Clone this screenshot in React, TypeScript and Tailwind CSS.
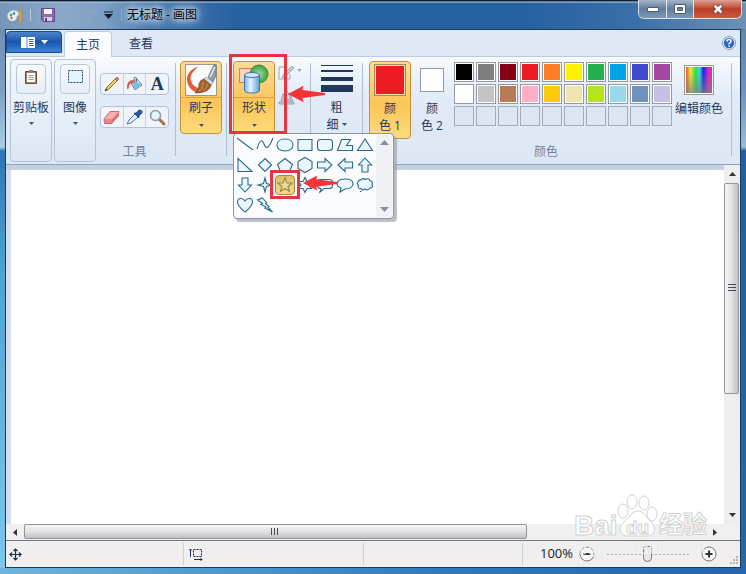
import React from "react";

const ROW_ONE = [
  ["Black", "bg-[#000000]"],
  ["Gray", "bg-[#7f7f7f]"],
  ["Dark red", "bg-[#880015]"],
  ["Red", "bg-[#ed1c24]"],
  ["Orange", "bg-[#ff7f27]"],
  ["Yellow", "bg-[#fff200]"],
  ["Green", "bg-[#22b14c]"],
  ["Turquoise", "bg-[#00a2e8]"],
  ["Indigo", "bg-[#3f48cc]"],
  ["Purple", "bg-[#a349a4]"],
];

const ROW_TWO = [
  ["White", "bg-[#ffffff]"],
  ["Light gray", "bg-[#c3c3c3]"],
  ["Brown", "bg-[#b97a57]"],
  ["Rose", "bg-[#ffaec9]"],
  ["Gold", "bg-[#ffc90e]"],
  ["Light yellow", "bg-[#efe4b0]"],
  ["Lime", "bg-[#b5e61d]"],
  ["Light turquoise", "bg-[#99d9ea]"],
  ["Blue gray", "bg-[#7092be]"],
  ["Lavender", "bg-[#c8bfe7]"],
];

const EMPTY_SLOTS = [1, 2, 3, 4, 5, 6, 7, 8, 9, 10];

const SHAPES = [
  ["Line", "M1 2 L17 14"],
  ["Curve", "M1 13 C4 3 6 3 8 8 C10 14 13 12 17 2"],
  ["Oval", "M9 3 C14 3 17 5.500 17 9 C17 12.500 14 15 9 15 C4 15 1 12.500 1 9 C1 5.500 4 3 9 3Z"],
  ["Rectangle", "M2 3.500H16V14.500H2Z"],
  ["Rounded rectangle", "M4.500 3.500H13.500Q16.500 3.500 16.500 6.500V11.500Q16.500 14.500 13.500 14.500H4.500Q1.500 14.500 1.500 11.500V6.500Q1.500 3.500 4.500 3.500Z"],
  ["Polygon", "M5.500 3.500H14.500L10.500 9.500H16.500V14.500H1.500Z"],
  ["Triangle", "M9 3L16.500 14.500H1.500Z"],
  ["Right triangle", "M2 2.500V15.500H16Z"],
  ["Diamond", "M9 2.500L15.500 9L9 15.500L2.500 9Z"],
  ["Pentagon", "M9 2.500L16.500 8.500L13.500 15.500H4.500L1.500 8.500Z"],
  ["Hexagon", "M9 1.500L16 5.500V12.500L9 16.500L2 12.500V5.500Z"],
  ["Right arrow", "M1.500 6H9V2.500L16 9L9 15.500V12H1.500Z"],
  ["Left arrow", "M16.500 6H9V2.500L2 9L9 15.500V12H16.500Z"],
  ["Up arrow", "M6 16V9H2.500L9 2L15.500 9H12V16Z"],
  ["Down arrow", "M6 2V9H2.500L9 16L15.500 9H12V2Z"],
  ["Four-point star", "M9 2L10.500 7.500L16 9L10.500 10.500L9 16L7.500 10.500L2 9L7.500 7.500Z"],
  ["Five-point star", "M9 2L11 7H16L12 10.500L13.500 15.500L9 12.500L4.500 15.500L6 10.500L2 7H7Z"],
  ["Six-point star", "M9 1.500L11 5.500H15.500L13 9L15.500 12.500H11L9 16.500L7 12.500H2.500L5 9L2.500 5.500H7Z"],
  ["Rounded callout", "M4.500 3.500H13.500Q16.500 3.500 16.500 6.500V9.500Q16.500 12.500 13.500 12.500H8L4 16L5 12.500Q1.500 12.500 1.500 9.500V6.500Q1.500 3.500 4.500 3.500Z"],
  ["Oval callout", "M9 3C14 3 17 5 17 8C17 11 13.500 13 9 13L4 16L5 12C2.500 11 1 10 1 8C1 5 4 3 9 3Z"],
  ["Cloud callout", "M5 4Q7 1.500 9.500 3.500Q13 1.500 14 4.500Q17.500 6 16 8.500Q17.500 12 14 12Q12 15 9 13Q6 15 5 12.500Q1 13 2.500 9.500Q0 7 2.500 5.500Q3 3.500 5 4ZM4 15.500H5.500"],
  ["Heart", "M9 16C5 12.500 1.500 10 1.500 6C1.500 1.500 7 1.500 9 5C11 1.500 16.500 1.500 16.500 6C16.500 10 13 12.500 9 16Z"],
  ["Lightning", "M6.500 2L10.500 6.500L9.500 7.500L13 10.500L12 11.500L16.500 16L9 12L10 11L5 8.500L6.500 7.500L1.500 4Z"],
];

function Caret({ className = "text-[#44546c]" }: { className?: string }) {
  return (
    <svg className={className} width="5" height="3" viewBox="0 0 5 3" aria-hidden="true">
      <path d="M0 0H5L2.500 3Z" fill="currentColor" />
    </svg>
  );
}

function Divider() {
  return <div className="mt-1 mb-1.5 w-px shrink-0 self-stretch bg-[#aebed3]" />;
}

function PaintLogo() {
  return (
    <svg width="16" height="16" viewBox="0 0 16 16" aria-hidden="true">
      <path d="M1 10C0 6 4 3 8 4C12 4 13 8 10 9C8 10 10 12 8 13C5 15 1 13 1 10Z" fill="#e9f3fa" stroke="#c3dcee" />
      <circle cx="4" cy="8" r="1.500" fill="#58a849" />
      <circle cx="7" cy="6.500" r="1.300" fill="#3979c9" />
      <circle cx="4.500" cy="11" r="1.300" fill="#d86c50" />
      <path d="M12 5L13 1L14.500 5V15H12Z" fill="#f0a030" stroke="#c97f22" strokeWidth=".5" />
    </svg>
  );
}

function TitleBar() {
  return (
    <header className="flex h-[29px] shrink-0 items-center pl-[7px] pr-1 text-xs text-black">
      <PaintLogo />
      <span className="ml-[7px] h-3 w-px bg-[#b9cce0]" />
      <button aria-label="保存" className="ml-2.5">
        <svg width="14" height="14" viewBox="0 0 14 14">
          <path d="M.5.500H13.500V13.500H2L.5 12Z" fill="#8c6bb3" stroke="#68478e" />
          <path d="M3 1H11V6H3Z" fill="#f5f5fb" />
          <path d="M3 9H11V13H3Z" fill="#d8cfe8" />
          <path d="M4 10H6V13H4Z" fill="#59417b" />
        </svg>
      </button>
      <button aria-label="撤消" className="ml-2 text-[#8ba6c5]">
        <svg width="14" height="14" viewBox="0 0 14 14" fill="none" stroke="currentColor" strokeWidth="2">
          <path d="M2 2V6H6M2 6C5 2 12 3 11 8C11 10 9 11 7 12" />
        </svg>
      </button>
      <button aria-label="重做" className="ml-[7px] text-[#8ba6c5]">
        <svg width="14" height="14" viewBox="0 0 14 14" fill="none" stroke="currentColor" strokeWidth="2">
          <path d="M12 2V6H8M12 6C9 2 2 3 3 8C3 10 5 11 7 12" />
        </svg>
      </button>
      <button aria-label="自定义快速访问工具栏" className="ml-1.5">
        <svg width="9" height="8" viewBox="0 0 9 8">
          <path d="M0 1H9" stroke="#111827" />
          <path d="M0 3H9L4.500 8Z" fill="#111827" />
        </svg>
      </button>
      <span className="ml-2 h-3 w-px bg-[#8ba9ca]" />
      <h1 className="ml-[5px] [text-shadow:0_0_6px_#ffffff,0_0_10px_#ffffff,0_0_14px_#ffffffb0]">无标题 - 画图</h1>
      <div className="ml-auto flex h-[19px] self-start overflow-hidden rounded-b-md border border-t-0 border-[#d8e4ee] text-white">
        <button aria-label="最小化" className="flex w-7 items-center justify-center border-r border-[#dbe6ef] bg-linear-to-b from-[#a5b6c8] via-[#607d9b] via-50% to-[#7c9ab7]">
          <svg width="12" height="5" viewBox="0 0 12 5"><path d="M.5.500H11.500V4.500H.5Z" fill="#fff" stroke="#4f5d6e" /></svg>
        </button>
        <button aria-label="最大化" className="flex w-[27px] items-center justify-center border-r border-[#dbe6ef] bg-linear-to-b from-[#a5b6c8] via-[#607d9b] via-50% to-[#7c9ab7]">
          <svg width="12" height="10" viewBox="0 0 12 10"><path d="M.5.500H11.500V9.500H.5Z" fill="#fff" stroke="#4f5d6e" /><path d="M3.500 3.500H8.500V6.500H3.500Z" fill="#6c87a3" stroke="#4f5d6e" /></svg>
        </button>
        <button aria-label="关闭" className="flex w-[47px] items-center justify-center bg-linear-to-b from-[#dda092] via-[#b93e27] via-50% to-[#cf5a3f]">
          <svg width="12" height="10" viewBox="0 0 12 10"><path d="M2 1L10 9M10 1L2 9" stroke="#5a3c40" strokeWidth="4" /><path d="M2.500 1.500L9.500 8.500M9.500 1.500L2.500 8.500" stroke="#fff" strokeWidth="2.500" /></svg>
        </button>
      </div>
    </header>
  );
}

function Tabs() {
  return (
    <nav className="flex h-[26px] shrink-0 items-end bg-[#dfe9f5] text-xs text-[#1e395b]">
      <button aria-label="画图菜单" className="mb-[3px] flex h-[22px] w-14 items-center justify-center gap-1.5 rounded-t-sm border border-[#1c4a96] bg-linear-to-b from-[#4a83cb] via-[#1c56ac] via-50% to-[#3b83d6]">
        <svg width="14" height="11" viewBox="0 0 14 11"><path d="M0 0H14V11H0Z" fill="#fff" /><path d="M6 0V11" stroke="#5e8cca" /><path d="M8 2.500H12.500M8 4.500H12.500M8 6.500H12.500M8 8.500H12.500" stroke="#3368b2" /></svg>
        <svg width="7" height="4" viewBox="0 0 7 4"><path d="M0 0H7L3.500 4Z" fill="#fff" /></svg>
      </button>
      <button className="relative z-10 -mb-px ml-0.5 flex h-[26px] w-12 items-center justify-center rounded-t-sm border border-b-0 border-[#bccbde] bg-[#fafcff]">主页</button>
      <button className="ml-[17px] flex h-[25px] items-center">查看</button>
      <button aria-label="帮助" className="mr-1 mb-1.5 ml-auto">
        <svg width="14" height="14" viewBox="0 0 14 14">
          <circle cx="7" cy="7" r="6.500" fill="#fff" stroke="#7c96b8" />
          <circle cx="7" cy="7" r="5.200" fill="#2e64c4" />
          <path d="M5 5.500Q5 3.500 7 3.500Q9 3.500 9 5.200Q9 6.300 7.200 7.300V8.500M7.200 9.500V11" fill="none" stroke="#fff" strokeWidth="1.500" />
        </svg>
      </button>
    </nav>
  );
}

function CollapsedGroup({ label, children }: { label: string; children: React.ReactNode }) {
  return (
    <button className="flex h-[103px] w-[42px] shrink-0 flex-col items-center rounded-sm border border-[#b4c3d7] bg-linear-to-b from-[#f3f7fc] to-[#dce7f4] pt-1">
      <span className="flex h-[30px] w-[30px] items-start justify-center rounded-sm border border-[#bac8db] bg-linear-to-b from-[#fafcfe] to-[#e4ecf7] pt-1">{children}</span>
      <span className="mt-1 text-xs leading-5 whitespace-nowrap">{label}</span>
      <span className="mt-1"><Caret /></span>
    </button>
  );
}

function ToolButton({ name, children }: { name: string; children: React.ReactNode }) {
  return <button aria-label={name} className="flex h-5 flex-1 items-center justify-center">{children}</button>;
}

function Tools() {
  return (
    <section aria-label="工具" className="ml-1 flex w-[69px] shrink-0 flex-col pt-3.5">
      <div className="flex divide-x divide-[#c6d3e4] rounded-sm border border-[#b4c3d7] bg-[#eff4fb]">
        <ToolButton name="铅笔">
          <svg width="16" height="16" viewBox="0 0 16 16"><path d="M1 15L3 11L12 2L14 4L5 13Z" fill="#f4cb50" stroke="#78571e" strokeWidth=".8" /><path d="M11 3L13 1L15 3L13 5Z" fill="#d9776a" stroke="#8c4a3c" strokeWidth=".5" /><path d="M1 15L2 12.500L3.500 14Z" fill="#333" /></svg>
        </ToolButton>
        <ToolButton name="填充">
          <svg width="18" height="16" viewBox="0 0 18 16"><path d="M5 7L11 3L16 9L9 14Z" fill="#dcecf7" stroke="#58819d" /><path d="M6 7L9 5L14 8L16 9L9 14Z" fill="#83bddc" /><path d="M8 7V2Q9 0 10.500 2V6" fill="none" stroke="#5e7787" /><path d="M7 4Q1 4 1 12Q2 15 3 11Q3 7 7 7Z" fill="#df5740" /></svg>
        </ToolButton>
        <ToolButton name="文本"><span className="font-['Liberation_Serif',serif] text-lg leading-5 font-bold text-[#1f3655]">A</span></ToolButton>
      </div>
      <div className="mt-[11px] flex divide-x divide-[#c6d3e4] rounded-sm border border-[#b4c3d7] bg-[#eff4fb]">
        <ToolButton name="橡皮擦">
          <svg width="17" height="15" viewBox="0 0 17 15"><path d="M1 9L7 1.500H16L10 9L9 13.500H1.500Z" fill="#e88787" stroke="#b8585b" strokeWidth=".8" /><path d="M1.500 9L7.300 2H15.500L9.500 9Z" fill="#f5b1ad" /><path d="M10 9L16 2V6L9 13.500Z" fill="#d86f73" /></svg>
        </ToolButton>
        <ToolButton name="颜色选取器">
          <svg width="17" height="16" viewBox="0 0 17 16"><path d="M1 15L3 11L9 5L12 8L5 14Z" fill="#d8effa" stroke="#527893" /><path d="M8 4L10 4L13 1Q17 1 16 4L13 7V9Z" fill="#245aa1" stroke="#173c71" strokeWidth=".7" /></svg>
        </ToolButton>
        <ToolButton name="放大镜">
          <svg width="17" height="17" viewBox="0 0 17 17"><path d="M10 10L15 15" stroke="#a96f43" strokeWidth="3" strokeLinecap="round" /><circle cx="6.500" cy="6.500" r="5" fill="#e7f2fa" stroke="#8b98a5" strokeWidth="1.500" /></svg>
        </ToolButton>
      </div>
      <p className="mt-auto text-center text-xs leading-5 text-[#71839c]">工具</p>
    </section>
  );
}

const ACTIVE = "rounded-sm border border-[#c29336] bg-linear-to-b from-[#fbdb9a] via-[#fcc557] via-55% to-[#fddb7c]";

function Brushes() {
  return (
    <button className={`mt-0.5 flex h-[73px] w-[42px] shrink-0 flex-col items-center pt-0.5 ${ACTIVE}`}>
      <svg width="32" height="32" viewBox="0 0 32 32">
        <path d="M.5.500H31.500V31.500H.5Z" fill="#f9fbfd" stroke="#9e9a8a" />
        <path d="M13 3C1 6 -1 18 6 25C10 30 17 28 20 23C14 26 8 23 6 17C4 11 9 7 13 3Z" fill="#e75c30" />
        <path d="M23 13L29 1H31V12L28 18Z" fill="#8f9cab" stroke="#5d6d7d" strokeWidth=".7" />
        <path d="M25 13L30 3" stroke="#e6ecf2" strokeWidth="1.500" />
        <path d="M21 13L28 18L26 22L18 16Z" fill="#d5dde4" stroke="#777" strokeWidth=".5" />
        <path d="M19 15L26 21Q24 29 10 29Q15 25 14 20Q15 16 19 15Z" fill="#a8622d" stroke="#704018" strokeWidth=".7" />
        <path d="M14 27Q18 25 18 18M18 27Q22 24 23 20" stroke="#cf925c" fill="none" />
      </svg>
      <span className="mt-px w-full border-t border-[#d9a341] pt-0.5 text-xs leading-4">刷子</span>
      <span className="mt-2"><Caret /></span>
    </button>
  );
}

function AnnotationArrow({ className }: { className: string }) {
  return (
    <svg className={`pointer-events-none absolute z-30 ${className}`} viewBox="0 0 36 16" aria-hidden="true">
      <path d="M0 8L15 0L14 4L36 7V9L14 12L15 16Z" fill="#f63438" />
    </svg>
  );
}

function ShapeMenu() {
  return (
    <div className="absolute top-[72px] left-0 z-20 flex h-[86px] w-[161px] rounded-sm border border-[#8795a8] bg-[#fafbfd] p-px shadow-[3px_3px_1px_#9ba1a9b0]">
      <div className="grid grid-cols-7 content-start">
        {SHAPES.map(([name, d]) => (
          <button
            key={name}
            aria-label={name}
            className={
              name === "Five-point star"
                ? "flex size-5 items-center justify-center rounded-sm border border-[#a5894e] bg-linear-to-b from-[#e3bd63] to-[#f8dd83] text-[#8b8a60]"
                : "flex size-5 items-center justify-center text-[#2e688c]"
            }
          >
            <svg className="shrink-0" width="18" height="18" viewBox="0 0 18 18">
              <path d={d} fill={name === "Line" || name === "Curve" ? "none" : name === "Five-point star" ? "#f5d98c" : "#e9f7fd"} stroke="currentColor" strokeWidth="1.100" />
            </svg>
          </button>
        ))}
      </div>
      <div className="ml-auto flex w-4 flex-col items-center justify-between bg-[#f0f1f4] py-[5px] text-[#8190aa]">
        <button aria-label="向上滚动"><svg className="block" width="9" height="5" viewBox="0 0 9 5"><path d="M0 5L4.500 0L9 5Z" fill="currentColor" /></svg></button>
        <button aria-label="向下滚动"><svg className="block" width="9" height="5" viewBox="0 0 9 5"><path d="M0 0L4.500 5L9 0Z" fill="currentColor" /></svg></button>
      </div>
    </div>
  );
}

function ShapesGroup() {
  return (
    <section aria-label="形状" className="relative mt-0.5 ml-1.5 flex w-[77px] shrink-0 gap-[3px]">
      <button className={`flex h-[73px] w-[42px] shrink-0 flex-col items-center pt-0.5 ${ACTIVE}`}>
        <svg width="32" height="32" viewBox="0 0 32 32">
          <defs>
            <linearGradient id="cylinder"><stop stopColor="#7fb7eb" /><stop offset=".4" stopColor="#e3f3ff" /><stop offset="1" stopColor="#5e9edc" /></linearGradient>
            <radialGradient id="ball"><stop stopColor="#a5dc9b" /><stop offset="1" stopColor="#39a146" /></radialGradient>
          </defs>
          <path d="M1.500 4.500H17.500V18.500H1.500Z" fill="#fbd6bd" stroke="#e07860" />
          <circle cx="21" cy="10" r="9" fill="url(#ball)" stroke="#398d3d" />
          <path d="M6.500 11V26Q6.500 29 14 29Q21.500 29 21.500 26V11" fill="url(#cylinder)" stroke="#3a74b0" />
          <ellipse cx="14" cy="11" rx="7.500" ry="2.500" fill="#d0e9fc" stroke="#3a74b0" />
        </svg>
        <span className="mt-px w-full border-t border-[#d9a341] pt-0.5 text-xs leading-4">形状</span>
        <span className="mt-2"><Caret /></span>
      </button>
      <div className="flex flex-col items-start gap-2 pt-1 text-[#9aa7b8]">
        <button disabled aria-label="轮廓" className="flex gap-0.5">
          <svg width="17" height="16" viewBox="0 0 17 16"><path d="M12 9V14H1V2H8" fill="none" stroke="currentColor" /><path d="M4 13L6 9L14 1L16 3L8 11Z" fill="#c4ccd6" stroke="currentColor" /></svg>
          <span className="mt-1"><Caret className="text-[#9aa7b8]" /></span>
        </button>
        <button disabled aria-label="填充形状">
          <svg width="17" height="16" viewBox="0 0 17 16"><path d="M1 13H16V15H1ZM3 12L5 5H12L15 12Z" fill="#c4ccd6" stroke="currentColor" /><path d="M6 5Q9 -2 11 6L13 10H6Z" fill="#e2e7ee" stroke="currentColor" /></svg>
        </button>
      </div>
      <ShapeMenu />
      <div className="pointer-events-none absolute -top-[7px] -left-1 z-30 h-20 w-[58px] border-3 border-[#e5363f]" />
      <div className="pointer-events-none absolute top-[109px] left-[37px] z-30 h-[29px] w-[30px] border-3 border-[#e5363f]" />
      <AnnotationArrow className="top-6 left-[55px] h-[18px] w-[37px]" />
      <AnnotationArrow className="top-[114px] left-[70px] h-4 w-[34px]" />
    </section>
  );
}

function Swatch({ name, fill }: { name: string; fill: string }) {
  return <button aria-label={name} className={`size-5 border border-[#94999f] shadow-[inset_0_0_0_1px_#ffffff] ${fill}`} />;
}

function Ribbon() {
  return (
    <div className="flex h-[109px] shrink-0 border-t border-b border-t-[#bccbde] border-b-[#8fa5bf] bg-linear-to-b from-[#f8fbfe] via-[#e2ebf7] via-35% to-[#dce7f5] pt-0.5 pb-0.5 pl-1 text-[#1e395b]">
      <div className="flex shrink-0 gap-0.5">
        <CollapsedGroup label="剪贴板">
          <svg width="14" height="15" viewBox="0 0 14 15"><path d="M1.500 2.500H12.500V14.500H1.500Z" fill="#b0875a" stroke="#704e2d" /><path d="M3 4H11V13H3Z" fill="#fff" /><path d="M5 1H9V4H5Z" fill="#7b838b" /><path d="M4.500 6.500H9.500M4.500 8.500H9.500M4.500 10.500H9.500" stroke="#8d9aa9" /></svg>
        </CollapsedGroup>
        <CollapsedGroup label="图像">
          <svg width="15" height="15" viewBox="0 0 15 15"><path d="M.5 1.500H14.500V13.500H.5Z" fill="#e5f3fc" stroke="#28486e" strokeDasharray="2 1" /></svg>
        </CollapsedGroup>
      </div>
      <Tools />
      <div className="ml-1.5 flex shrink-0 gap-1">
        <Divider />
        <Brushes />
        <Divider />
      </div>
      <ShapesGroup />
      <Divider />
      <button className="mt-0.5 flex w-[51px] shrink-0 flex-col items-center pt-1 text-xs leading-[17px]">
        <svg width="32" height="28" viewBox="0 0 32 28"><path d="M0 0H32V1H0ZM0 5H32V7H0ZM0 12H32V16H0ZM0 20H32V27H0Z" fill="#1e395b" /></svg>
        <span className="mt-1.5">粗</span>
        <span className="flex items-center gap-[3px]">细<Caret /></span>
      </button>
      <Divider />
      <section aria-label="颜色" className="relative ml-1.5 flex shrink-0 items-start">
        <button className={`mt-0.5 flex h-[78px] w-[42px] flex-col items-center pt-0.5 text-xs leading-[17px] ${ACTIVE}`}>
          <span className="size-8 border border-[#a5894e] bg-[#ed1c24] shadow-[inset_0_0_0_1px_#fbe5b5]" />
          <span className="mt-1">颜</span>
          <span>色 1</span>
        </button>
        <button className="mt-0.5 flex w-[42px] flex-col items-center pt-[7px] text-xs leading-[17px]">
          <span className="size-6 border border-[#8d99a8] bg-white" />
          <span className="mt-2">颜</span>
          <span>色 2</span>
        </button>
        <div className="ml-px flex flex-col items-center self-stretch">
          <div className="grid grid-cols-10 gap-0.5 pt-[3px]">
            {ROW_ONE.map(([name, fill]) => <Swatch key={name} name={name} fill={fill} />)}
            {ROW_TWO.map(([name, fill]) => <Swatch key={name} name={name} fill={fill} />)}
            {EMPTY_SLOTS.map((slot) => <span key={slot} className="size-5 border border-[#a3abb6] bg-[#dde7f4]" />)}
          </div>
        </div>
        <button className="ml-[3px] flex flex-col items-center pt-1.5 text-xs leading-4 whitespace-nowrap">
          <span className="h-[30px] w-[30px] border border-[#999] bg-[linear-gradient(to_bottom,transparent_20%,#808080c0),linear-gradient(to_right,#e33,#ee3_20%,#3d4_38%,#2de_52%,#22d_66%,#d2d_84%,#e34)] shadow-[inset_0_0_0_1px_#ffffff]" />
          <span className="mt-1.5">编辑颜色</span>
        </button>
        <p className="absolute right-0 bottom-0 left-0 text-center text-xs leading-5 text-[#71839c]">颜色</p>
      </section>
      <span className="w-2 shrink-0" />
      <Divider />
    </div>
  );
}

function Workspace() {
  return (
    <main className="flex min-h-0 flex-1 flex-col bg-[#f0f0f0]">
      <div className="flex min-h-0 flex-1">
        <div className="flex min-w-0 flex-1 border-t-5 border-[#c4d0df] bg-[#d3ddee] pl-[5px]">
          <div className="min-w-0 flex-1 bg-white" />
        </div>
        <div className="flex w-4 flex-col bg-[#eeeeee]">
          <button aria-label="向上" className="flex h-[18px] shrink-0 items-center justify-center"><svg width="7" height="4" viewBox="0 0 7 4"><path d="M0 4L3.500 0L7 4Z" fill="#333" /></svg></button>
          <div className="mr-px flex flex-[210] items-center justify-center rounded-xs border border-[#8f959b] bg-linear-to-r from-[#f5f5f5] via-[#e2e2e4] to-[#bfc1c5]">
            <svg width="8" height="8" viewBox="0 0 8 8"><path d="M0 .5H8M0 3.500H8M0 6.500H8" stroke="#444b54" /></svg>
          </div>
          <div className="flex-[113]" />
          <button aria-label="向下" className="flex h-[18px] shrink-0 items-center justify-center"><svg width="7" height="4" viewBox="0 0 7 4"><path d="M0 0L3.500 4L7 0Z" fill="#333" /></svg></button>
        </div>
      </div>
      <div className="flex h-4 shrink-0 pr-4">
        <button aria-label="向左" className="flex w-[18px] shrink-0 items-center justify-center"><svg width="4" height="7" viewBox="0 0 4 7"><path d="M4 0L0 3.500L4 7Z" fill="#333" /></svg></button>
        <div className="mb-px flex flex-[502] items-center justify-center rounded-xs border border-[#8f959b] bg-linear-to-b from-[#f5f5f5] via-[#e2e2e4] to-[#bfc1c5]">
          <svg width="8" height="7" viewBox="0 0 8 7"><path d="M.5 0V7M3.500 0V7M6.500 0V7" stroke="#444b54" /></svg>
        </div>
        <div className="flex-[180]" />
        <button aria-label="向右" className="flex w-[18px] shrink-0 items-center justify-center"><svg width="4" height="7" viewBox="0 0 4 7"><path d="M0 0L4 3.500L0 7Z" fill="#333" /></svg></button>
      </div>
    </main>
  );
}

function StatusBar() {
  return (
    <footer className="flex h-[27px] shrink-0 items-center border-t border-[#70767d] bg-[#f0eeee] text-[#1e2f4b]">
      <div className="flex flex-[177] items-center pl-[3px]">
        <svg width="13" height="13" viewBox="0 0 13 13"><path d="M6.500 1V12M1 6.500H12M4.500 3L6.500 1L8.500 3M4.500 10L6.500 12L8.500 10M3 4.500L1 6.500L3 8.500M10 4.500L12 6.500L10 8.500" fill="none" stroke="currentColor" strokeWidth="1.200" /></svg>
      </div>
      <div className="flex h-[22px] flex-[178] items-center border-l border-[#d0d0d2] pl-[5px]">
        <svg width="14" height="13" viewBox="0 0 14 13"><path d="M1.500 1V9M0 2.500L1.500 1L3 2.500M5 11.500H13M11.500 10L13 11.500L11.500 13" fill="none" stroke="currentColor" /><path d="M4.500 1.500H12.500V8.500H4.500Z" fill="none" stroke="currentColor" strokeDasharray="2 1" /></svg>
      </div>
      <div className="h-[22px] flex-[161] border-l border-[#d0d0d2]" />
      <div className="flex h-[22px] w-[218px] shrink-0 items-center border-l border-[#d0d0d2] pl-[17px] text-[13px] text-[#222]">
        <label htmlFor="zoom" className="w-[39px]">100%</label>
        <button aria-label="缩小"><svg className="block" width="16" height="16" viewBox="0 0 16 16"><circle cx="8" cy="8" r="7" fill="#f8f8f8" stroke="#777" /><path d="M4.500 8H11.500" stroke="#333" strokeWidth="2" /></svg></button>
        <input
          id="zoom"
          type="range"
          defaultValue={50}
          className="mx-3 h-4 w-[82px] appearance-none bg-[repeating-linear-gradient(to_right,#aaa_0_2px,transparent_2px_4px)] bg-[length:100%_1px] bg-center bg-no-repeat [&::-webkit-slider-thumb]:h-4 [&::-webkit-slider-thumb]:w-[9px] [&::-webkit-slider-thumb]:appearance-none [&::-webkit-slider-thumb]:rounded-t-xs [&::-webkit-slider-thumb]:rounded-b-md [&::-webkit-slider-thumb]:border [&::-webkit-slider-thumb]:border-[#777] [&::-webkit-slider-thumb]:bg-[#e8e8e8]"
        />
        <button aria-label="放大"><svg className="block" width="16" height="16" viewBox="0 0 16 16"><circle cx="8" cy="8" r="7" fill="#f8f8f8" stroke="#777" /><path d="M4.500 8H11.500M8 4.500V11.500" stroke="#333" strokeWidth="2" /></svg></button>
        <svg className="mr-0.5 ml-auto self-end" width="9" height="9" viewBox="0 0 9 9"><path d="M7 0H9V2H7ZM7 3H9V5H7ZM4 3H6V5H4ZM7 6H9V8H7ZM4 6H6V8H4ZM1 6H3V8H1Z" fill="#b9b4b0" /></svg>
      </div>
    </footer>
  );
}

function Watermark() {
  return (
    <div className="pointer-events-none absolute right-9 bottom-[15px] z-40 w-[138px] font-['Liberation_Sans','Noto_Sans_CJK_SC',sans-serif] text-white/80">
      <svg className="block overflow-visible" width="138" height="45" viewBox="0 0 138 45">
        <g fill="#ffffff" fillOpacity=".75" stroke="#d2d2d2" strokeWidth="1">
          <ellipse cx="51" cy="17" rx="5" ry="7" />
          <ellipse cx="60" cy="8" rx="5" ry="7" />
          <ellipse cx="72" cy="9" rx="5" ry="7" />
          <ellipse cx="80" cy="20" rx="5" ry="7" />
          <path d="M66 17C72 17 75 24 79 28C86 34 82 42 75 42C70 42 62 42 56 42C48 42 45 34 52 28C57 24 60 17 66 17Z" />
        </g>
        <g fill="#ffffff" stroke="#d2d2d2" strokeWidth="1" fontWeight="700">
          <text x="2" y="41" fontSize="28">Bai</text>
          <text x="54" y="40" fontSize="19">du</text>
          <text x="87" y="39" fontSize="24">经验</text>
        </g>
      </svg>
      <p className="pl-1 text-base leading-5 [-webkit-text-stroke:1px_#d9d9d950]">jingyan.baidu.com</p>
    </div>
  );
}

export default function App() {
  return (
    <div className="relative flex h-screen flex-col overflow-hidden bg-[linear-gradient(to_bottom,#0b2038_0,#0b2038_1px,#c2d5e6_2px,transparent_3px),linear-gradient(to_right,#7795b8_0,#8ba8c8_8%,#7d9fc4_14%,#4b7bb0_20%,#2661a0_32%,#2661a0_70%,#3a6fa8_85%,#6e90b5)] bg-[length:100%_29px] bg-no-repeat font-['Open_Sans','Noto_Sans_CJK_SC',sans-serif]">
      <TitleBar />
      <div className="flex min-h-0 flex-1 bg-[linear-gradient(to_right,#6fb4dd,#4c97cd_30%,#2f78bb_60%,#2465ae)] pb-1.5">
        <div className="w-[5px] shrink-0 bg-[linear-gradient(to_bottom,#6f8fb4,#7e9fc4_60px,#a9cbe3_118px,#2d76b3_122px,#4fa3d3_45%,#7ec6e8)]" />
        <div className="flex min-w-0 flex-1 flex-col border border-[#1c3c5e]">
          <Tabs />
          <Ribbon />
          <Workspace />
          <StatusBar />
        </div>
        <div className="w-[5px] shrink-0 bg-[linear-gradient(to_bottom,#6285ac,#6b92bd_60px,#9db9d4_118px,#1f5fa5_122px,#2465ae)]" />
      </div>
      <Watermark />
    </div>
  );
}
